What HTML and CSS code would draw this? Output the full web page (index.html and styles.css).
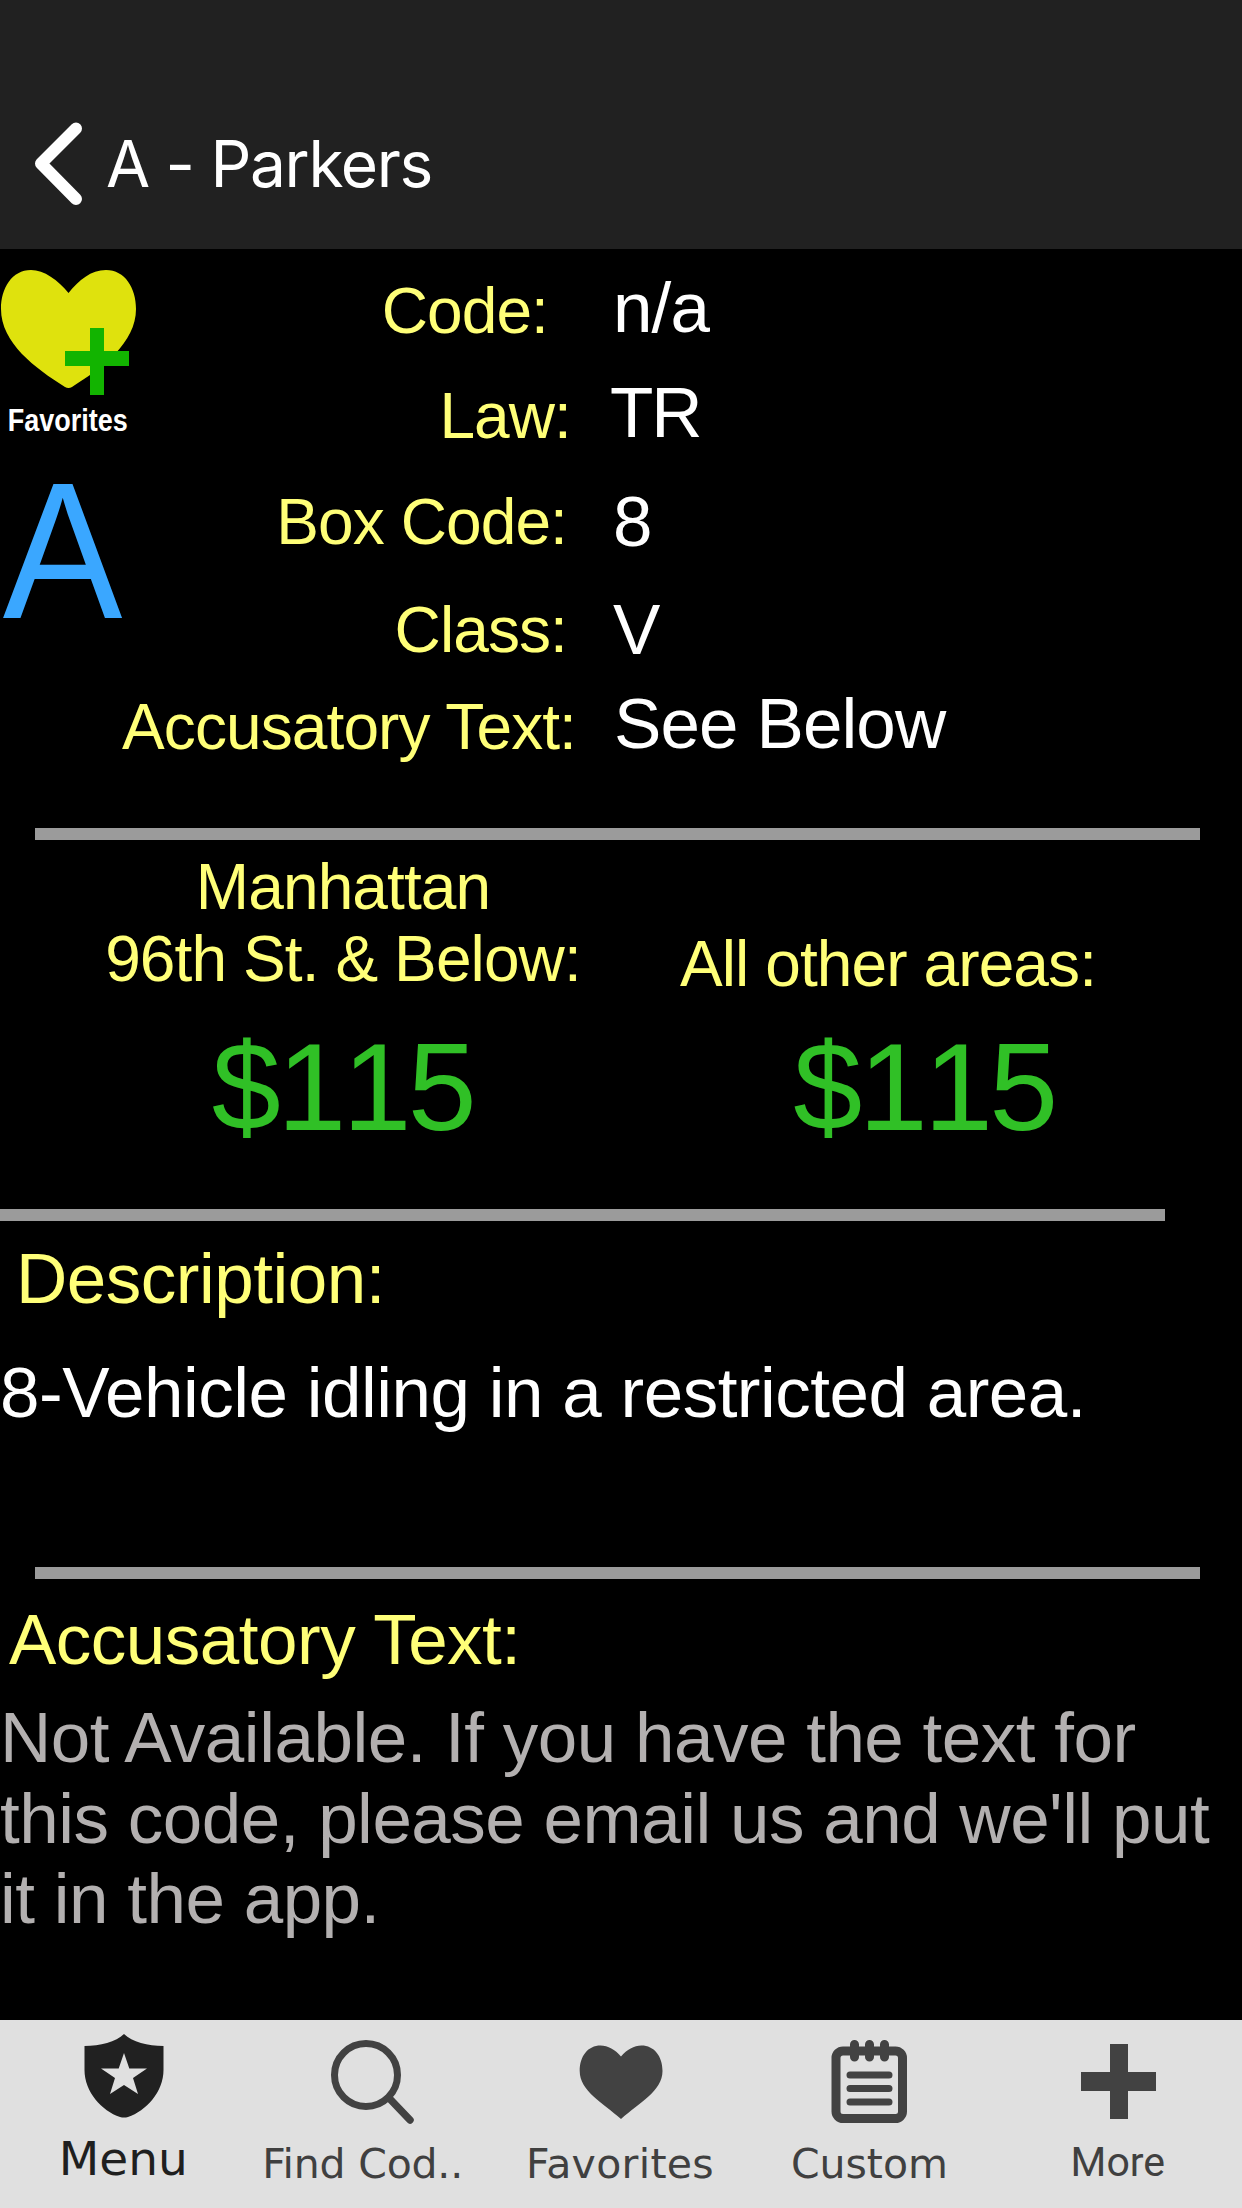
FILE: index.html
```
<!DOCTYPE html>
<html lang="en">
	<head>
		<meta charset="UTF-8" />
		<meta name="viewport" content="width=device-width, initial-scale=1.0" />
		<title>A - Parkers</title>
		<link rel="stylesheet" href="styles.css">
	</head>

	<body>
		<header class="top-bar">
			<svg class="back" viewBox="0 0 50 84" fill="none" stroke="#fff" stroke-width="12" stroke-linecap="round" stroke-linejoin="round">
				<path d="M42 7.500L7 42.500L42 78" />
			</svg>
			<h1 class="title">A - Parkers</h1>
		</header>

		<main class="content">
			<section class="info">
				<div class="side">
					<svg class="add-heart" viewBox="0 0 137 130">
						<path d="M68.500 26C58 13 44 3 31 3C12 3 1 21 1 42C1 76 35 101 65 120Q68.500 122 72 120C102 101 136 76 136 42C136 21 125 3 106 3C91 3 79 13 68.500 26Z" fill="#dfe20d" />
						<path d="M90 61h14v23h25v15h-25v29H90V99H65V84h25z" fill="#12b400" />
					</svg>
					<div class="add-label">Favorites</div>
					<div class="letter">A</div>
				</div>
				<div class="fields">
					<div class="field code">
						<span class="label">Code:</span>
						<span class="value">n/a</span>
					</div>
					<div class="field law">
						<span class="label">Law:</span>
						<span class="value">TR</span>
					</div>
					<div class="field box">
						<span class="label">Box Code:</span>
						<span class="value">8</span>
					</div>
					<div class="field class">
						<span class="label">Class:</span>
						<span class="value">V</span>
					</div>
					<div class="field text">
						<span class="label">Accusatory Text:</span>
						<span class="value">See Below</span>
					</div>
				</div>
			</section>

			<hr class="line" />

			<section class="fines">
				<div class="fine">
					<div class="area">Manhattan<br />96th St. &amp; Below:</div>
					<div class="amount">$115</div>
				</div>
				<div class="fine other">
					<div class="area">All other areas:</div>
					<div class="amount">$115</div>
				</div>
			</section>

			<hr class="line left" />

			<section class="description">
				<h2 class="heading">Description:</h2>
				<p class="body">8-Vehicle idling in a restricted area.</p>
			</section>

			<hr class="line" />

			<section class="accusatory">
				<h2 class="heading">Accusatory Text:</h2>
				<p class="body">Not Available. If you have the text for<br />this code, please email us and we'll put<br />it in the app.</p>
			</section>
		</main>

		<nav class="tabs">
			<a class="tab active">
				<svg class="icon" viewBox="0 0 90 90">
					<path d="M45 0C53 8 69 12 84.500 12V36C84.500 58 67 77 49 83Q45 84 41 83C23 77 5.500 58 5.500 36V12C21 12 37 8 45 0Z" fill="#212121" />
					<path d="M45 19L50.300 34.500H68L54 44L59 60L45 51L31 60L36 44L22 34.500H39.700Z" fill="#e0e0e0" />
				</svg>
				<span>Menu</span>
			</a>
			<a class="tab find">
				<svg class="icon" viewBox="0 0 90 90" fill="none" stroke="#424242">
					<circle cx="38" cy="41" r="31.500" stroke-width="7" />
					<path d="M61 64L82 86" stroke-width="7.500" stroke-linecap="round" />
				</svg>
				<span>Find Cod..</span>
			</a>
			<a class="tab fav">
				<svg class="icon" viewBox="0 0 90 90">
					<path d="M45 22.500C39 15.500 32 11.500 24.500 11.500C12 11.500 3.700 22 3.700 37C3.700 57 27 69 45 85C63 69 86.500 57 86.500 37C86.500 22 78 11.500 65.500 11.500C58 11.500 51 15.500 45 22.500Z" fill="#424242" />
				</svg>
				<span>Favorites</span>
			</a>
			<a class="tab">
				<svg class="icon" viewBox="0 0 90 90">
					<rect x="12" y="17" width="66.500" height="67.500" rx="7" fill="none" stroke="#424242" stroke-width="9" />
					<path d="M30.500 10.500V23M45.500 10.500V23M60.500 10.500V23" stroke="#424242" stroke-width="9" stroke-linecap="round" />
					<path d="M26 41H65M26 54.500H65M26 68H65" stroke="#424242" stroke-width="7" stroke-linecap="round" />
				</svg>
				<span>Custom</span>
			</a>
			<a class="tab more">
				<svg class="icon" viewBox="0 0 90 90">
					<path d="M37 10h18v28h28v19H55v28H37V57H8V38h29z" fill="#424242" />
				</svg>
				<span>More</span>
			</a>
		</nav>
	</body>
</html>
```
FILE: styles.css
```
* {
	box-sizing: border-box;
}

body {
	margin: 0;
	height: 2208px;
	display: flex;
	flex-direction: column;
	background: #000;
	color: #fff;
	font-family: "Liberation Sans", Arial, sans-serif;
	overflow: hidden;
}

h1,
h2,
p {
	margin: 0;
	font-weight: normal;
}

/* header */
.top-bar {
	display: flex;
	align-items: flex-start;
	height: 249px;
	padding: 121px 0 0 34px;
	background: #212121;
}
.back {
	width: 50px;
	height: 84px;
}
.title {
	margin-left: 22px;
	font-family: Inter, sans-serif;
	font-size: 64px;
	line-height: 86px;
	letter-spacing: -1.300px;
}

.content {
	flex: 1;
}

/* code details */
.info {
	display: flex;
	height: 579px;
}
.side {
	width: 100px;
	padding-top: 18px;
}
.add-heart {
	display: block;
	width: 137px;
	height: 130px;
}
.add-label {
	width: 137px;
	margin-top: 6px;
	padding-left: 9px;
	font-size: 31px;
	font-weight: bold;
	line-height: 36px;
	transform: scaleX(0.87);
	transform-origin: left;
}
.letter {
	margin-top: 6px;
	padding-left: 3px;
	font-size: 195px;
	line-height: 210px;
	color: #3aa7ff;
	transform: scaleX(0.92);
	transform-origin: left;
}
.fields {
	padding-top: 19px;
}
.field {
	display: flex;
	height: 80px;
	line-height: 80px;
	white-space: nowrap;
}
.label {
	width: 476px;
	padding-top: 3px;
	text-align: right;
	font-size: 64px;
	letter-spacing: -0.9px;
	color: #ffff78;
}
.value {
	padding-left: 38px;
	font-size: 71px;
	letter-spacing: -0.9px;
}
.code .label {
	padding-right: 28px;
}
.code .value,
.box .value,
.class .value {
	padding-left: 37px;
}
.law {
	margin-top: 25px;
}
.law .label {
	padding-right: 5px;
}
.law .value {
	padding-left: 34px;
	letter-spacing: -2px;
}
.box {
	margin-top: 29px;
}
.box .label,
.class .label {
	padding-top: 0;
	padding-right: 9px;
}
.class {
	margin-top: 28px;
}
.text {
	margin-top: 14px;
}

.line {
	width: 1165px;
	height: 12px;
	margin: 0 0 0 35px;
	border: 0;
	background: #9b9b9b;
}
.line.left {
	margin-left: 0;
}

/* fines */
.fines {
	display: flex;
	height: 369px;
	padding-top: 11px;
}
.fine {
	width: 585px;
	margin-left: 50px;
	text-align: center;
}
.area {
	height: 144px;
	padding-left: 1px;
	font-size: 64px;
	line-height: 72px;
	letter-spacing: -0.9px;
	color: #ffff78;
}
.amount {
	margin-top: 27px;
	font-size: 124px;
	line-height: 130px;
	letter-spacing: -3.600px;
	font-kerning: none;
	color: #30c026;
}
.fine.other {
	width: 500px;
	margin-left: 3px;
}
.fine.other .area {
	padding: 77px 0 0;
}
.fine.other .amount {
	padding-left: 72px;
}

/* text blocks */
.heading,
.body {
	font-size: 71px;
	line-height: 80px;
	letter-spacing: -0.5px;
	white-space: nowrap;
}
.heading {
	color: #ffff78;
}
.description {
	height: 346px;
	padding-top: 18px;
}
.description .heading {
	padding-left: 16px;
}
.description .body {
	margin-top: 34px;
}
.accusatory {
	padding-top: 21px;
}
.accusatory .heading {
	padding-left: 9px;
}
.accusatory .body {
	margin-top: 18px;
	line-height: 80.500px;
	color: #b3b0b0;
}

/* bottom tabs */
.tabs {
	display: flex;
	height: 188px;
	background: #e0e0e0;
}
.tab {
	flex: 1;
	display: flex;
	flex-direction: column;
	align-items: center;
	padding-top: 14px;
	font-family: "DejaVu Sans", sans-serif;
	font-size: 41px;
	line-height: 50px;
	white-space: nowrap;
	color: #404040;
}
.icon {
	width: 90px;
	height: 90px;
	margin-bottom: 15px;
}
.tab.active {
	font-size: 47px;
	color: #1f1f1f;
}
.tab.active .icon {
	margin-bottom: 10px;
}
.tab.active span {
	margin-right: 2px;
}
.tab.find span {
	margin-right: 20px;
	letter-spacing: -0.200px;
}
.tab.fav span {
	margin-right: 2px;
	letter-spacing: 0.3px;
}
.tab.more {
	font-family: Roboto, sans-serif;
	font-size: 41px;
}
.tab.more .icon {
	margin-bottom: 13px;
}
```
